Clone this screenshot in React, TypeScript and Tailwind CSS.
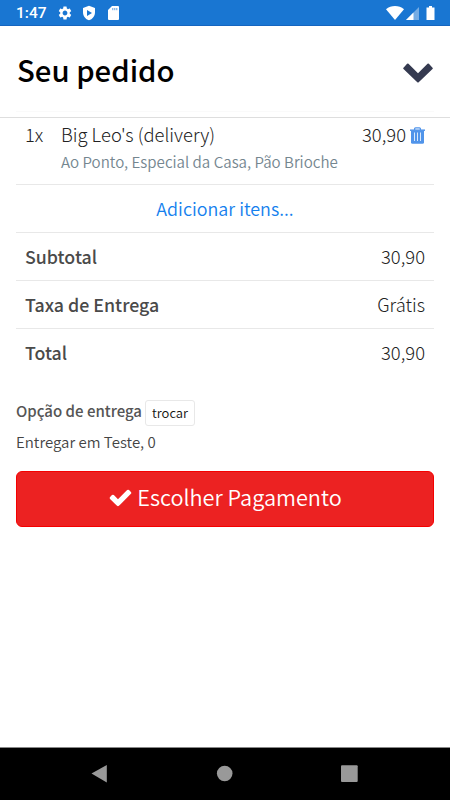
import React from "react";

// Icons
import { MdSettings } from "react-icons/md";

type summaryRow = {
  label: string
  value: string
}

const summary: summaryRow[] = [
  { label: "Subtotal", value: "30,90" },
  { label: "Taxa de Entrega", value: "Grátis" },
  { label: "Total", value: "30,90" },
];

const StatusBar: React.FC = () => (
  <div className="flex h-[26px] shrink-0 items-center border-b border-[#1565c0] bg-[#1976d2] pr-[15px] pl-4 text-white">
    <span className="w-[41px] pt-[3px] font-['Roboto',sans-serif] text-[15.5px] leading-none font-medium">1:47</span>
    <MdSettings className="h-4 w-4" />
    <svg className="ml-2 h-4 w-4" viewBox="0 0 24 24" fill="currentColor">
      <path fillRule="evenodd" d="M12 1 3 4.500V11c0 5.600 3.800 10.700 9 12 5.200-1.300 9-6.400 9-12V4.500L12 1Zm-3 6.500 7.500 4.500-7.500 4.500v-9Z" />
    </svg>
    <svg className="ml-[11px] h-[14px] w-[11px]" viewBox="0 0 11 14" fill="currentColor">
      <path d="M4 0h6q1 0 1 1v12q0 1-1 1H1q-1 0-1-1V4Z" />
      <path stroke="#1976d2" strokeWidth=".7" d="M4.800 2v2.200M6.800 2v2.200M8.800 2v2.200" />
    </svg>
    <div className="ml-auto flex items-center">
      <svg className="h-[14px] w-[18px]" viewBox="0 0 18 14" fill="currentColor">
        <path d="M0 3.200C5-1 13-1 18 3.200L9 14Z" />
      </svg>
      <svg className="ml-[2px] h-[14px] w-[13px]" viewBox="0 0 13 14" fill="currentColor">
        <path opacity=".4" d="M13 1v13H0Z" />
        <path d="M7.500 6.500V14H0Z" />
      </svg>
      <svg className="ml-[7px] h-[14px] w-[9px]" viewBox="0 0 9 14" fill="currentColor">
        <path d="M3 0h3v1.500h2.500V14H.5V1.500H3Z" />
      </svg>
    </div>
  </div>
);

const ChevronIcon: React.FC = () => (
  <svg className="h-5 w-[30px]" viewBox="0 0 30 20" fill="#353a50">
    <path d="M.5 4.700 4.100.8q.7-.7 1.400 0L15 10.200 24.500.8q.7-.7 1.400 0l3.600 3.900q.6.700 0 1.400L15.700 19.200q-.7.600-1.400 0L.5 6.100q-.6-.7 0-1.400Z" />
  </svg>
);

const CheckIcon: React.FC = () => (
  <svg className="h-[25px] w-[25px]" viewBox="0 0 1792 1792" fill="currentColor">
    <path d="M1671 566q0 40-28 68l-724 724-136 136q-28 28-68 28t-68-28l-136-136-362-362q-28-28-28-68t28-68l136-136q28-28 68-28t68 28l294 295 656-657q28-28 68-28t68 28l136 136q28 28 28 68z" />
  </svg>
);

const TrashIcon: React.FC = () => (
  <svg className="h-[17px] w-[15px]" viewBox="0 0 15 17" fill="none" stroke="#5094ea">
    <path strokeWidth="1.300" d="M4.600 3V1.700Q4.600.8 5.500.8h4q.9 0 .9.900V3" />
    <path strokeWidth="1.500" d="M0 3.200h15" />
    <path fill="#5094ea" stroke="none" d="M1 3.500h13v11.700q0 1.500-1.500 1.500h-10Q1 16.700 1 15.200Z" />
    <path stroke="#d8e8fc" d="M4.500 5.500v8.500M7.500 5.500v8.500M10.500 5.500v8.500" />
  </svg>
);

const NavigationBar: React.FC = () => (
  <div className="grid h-[53px] shrink-0 grid-cols-[124px_124px_124px] justify-center border-t border-[#888] bg-black text-[#999]">
    <svg className="h-[52px] w-[124px]" viewBox="0 0 124 52" fill="currentColor">
      <path d="M52.500 25.500 67.800 17v17.500Z" />
    </svg>
    <svg className="h-[52px] w-[124px]" viewBox="0 0 124 52" fill="currentColor">
      <circle cx="61.700" cy="25.500" r="7.800" />
    </svg>
    <svg className="h-[52px] w-[124px]" viewBox="0 0 124 52" fill="currentColor">
      <rect x="54" y="17.300" width="16.700" height="16.700" rx="1" />
    </svg>
  </div>
);

const App: React.FC = () => {
  return (
    <div className="flex h-[800px] w-[450px] flex-col overflow-hidden bg-white font-['Noto_Sans_CJK_SC',sans-serif] font-[350] text-[#222]">
      <StatusBar />

      {/* Header */}
      <header className="flex h-[92px] shrink-0 flex-col border-b border-[#dedede] px-4">
        <div className="flex h-[86px] items-center justify-between border-b border-[#fafafa]">
          <h1 className="pt-[2px] pl-px text-[29.3px] leading-none font-medium text-black">Seu pedido</h1>
          <div className="pt-[9px] pr-px">
            <ChevronIcon />
          </div>
        </div>
      </header>

      <main className="flex flex-1 flex-col px-4">
        <section className="flex h-[67px] border-b border-[#e8e8e8] pr-[9px] pl-[9px] text-[18.4px] font-light">
          <span className="w-9 pt-[3px] leading-[26px]">1x</span>
          <div className="flex-1">
            <p className="pt-[3px] leading-[26px]">Big Leo's (delivery)</p>
            <p className="pt-[2px] text-[15.1px] leading-[25px] font-[350] text-[#74868f]">Ao Ponto, Especial da Casa, Pão Brioche</p>
          </div>
          <div className="flex h-[34px] items-center gap-[4px]">
            <span>30,90</span>
            <TrashIcon />
          </div>
        </section>

        <a className="flex h-12 items-center justify-center border-b border-[#e8e8e8] text-[17.9px] text-[#1480ee]">
          Adicionar itens...
        </a>

        <dl>
          {summary.map((row) => (
            <div key={row.label} className="flex h-12 items-center justify-between border-b border-[#e8e8e8] px-[9px] text-[18.4px] last:border-b-0 last:pb-px">
              <dt className="text-[17.8px] font-medium text-[#4a4a4a]">{row.label}</dt>
              <dd className="font-light">{row.value}</dd>
            </div>
          ))}
        </dl>

        {/* Entrega */}
        <div className="mt-[23px] flex h-[26px] items-center gap-[3px] text-[15px]">
          <span className="pb-[3px] text-[15px] font-medium text-[#555]">Opção de entrega</span>
          <button className="h-[26px] rounded-[3px] border border-[#e8e8e8] px-[6px] pb-[2px] text-[13px] leading-none text-[#111]">trocar</button>
        </div>
        <p className="mt-[3px] text-[15px] leading-[26px] text-[#444]">Entregar em Teste, 0</p>

        <button className="mt-[16px] flex h-14 items-center justify-center gap-[4px] rounded-md border border-[#f50000] bg-[#ec2222] pb-[4px] text-[21.7px] text-white">
          <CheckIcon />
          Escolher Pagamento
        </button>
      </main>

      <NavigationBar />
    </div>
  );
};

export default App;
